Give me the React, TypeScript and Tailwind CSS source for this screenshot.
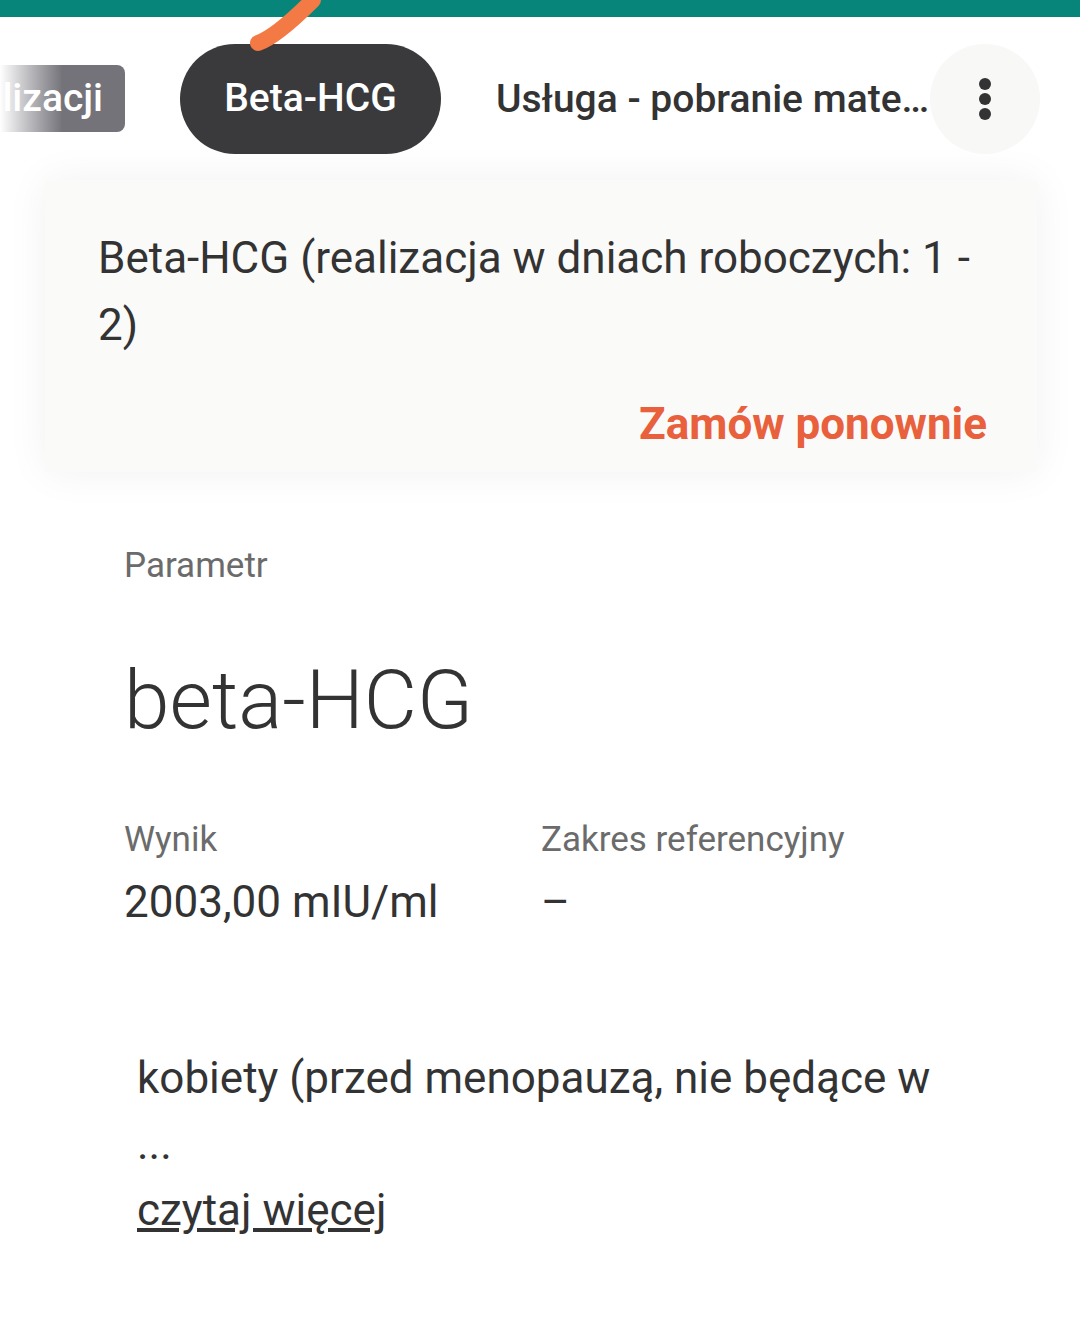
const MenuDots = () => (
  <svg width="14" height="44" viewBox="0 0 14 44" fill="#333333">
    <circle cx="7" cy="7" r="6" />
    <circle cx="7" cy="22" r="6" />
    <circle cx="7" cy="37" r="6" />
  </svg>
);

export default function App() {
  return (
    <div className="relative w-[1080px] h-[1343px] bg-white overflow-hidden font-['Roboto',sans-serif] text-[#333333]">
      <div className="h-[17px] bg-[#08857a]" />

      {/* tabs */}
      <div className="flex items-center h-[163px]">
        <div className="flex items-center justify-end w-[125px] h-[67px] rounded-r-lg bg-gradient-to-r from-white via-[#74737a] to-[#74737a] pr-[22px]">
          <span className="text-white text-[39px] font-medium leading-none">lizacji</span>
        </div>
        <div className="ml-[55px] flex items-center justify-center w-[261px] h-[110px] rounded-full bg-[#3a3a3c]">
          <span className="text-white text-[39px] font-medium leading-none">Beta-HCG</span>
        </div>
        <div className="ml-[55px] w-[434px] overflow-hidden whitespace-nowrap text-ellipsis text-[39px] font-medium leading-[50px]">
          Usługa - pobranie materiału
        </div>
        <div className="flex items-center justify-center w-[110px] h-[110px] rounded-full bg-[#f8f8f7]">
          <MenuDots />
        </div>
      </div>

      {/* order card */}
      <div className="mx-[45px] w-[992px] bg-[#fafaf9] shadow-[0_0_40px_rgba(0,0,0,0.06)] pt-[45px] pb-[17px] pl-[53px] pr-[50px]">
        <p className="text-[44px] leading-[67px]">Beta-HCG (realizacja w dniach roboczych: 1 - 2)</p>
        <div className="flex justify-end mt-[34px]">
          <span className="text-[#e8603c] text-[44px] font-bold leading-[62px]">Zamów ponownie</span>
        </div>
      </div>

      {/* result */}
      <div className="pl-[124px] pt-[74px]">
        <p className="text-[35px] text-[#6b6b6b] leading-[40px]">Parametr</p>
        <p className="mt-[69px] text-[82px] font-light leading-[90px]">beta-HCG</p>
        <div className="mt-[75px] grid grid-cols-[417px_1fr]">
          <div>
            <p className="text-[35px] text-[#6b6b6b] leading-[40px]">Wynik</p>
            <p className="mt-[17px] text-[44px] leading-[50px]">2003,00 mIU/ml</p>
          </div>
          <div>
            <p className="text-[35px] text-[#6b6b6b] leading-[40px]">Zakres referencyjny</p>
            <p className="mt-[17px] text-[44px] leading-[50px]">–</p>
          </div>
        </div>
      </div>

      <div className="pl-[137px] pt-[118px] text-[44px]">
        <p className="leading-[66px]">kobiety (przed menopauzą, nie będące w</p>
        <p className="leading-[66px]">...</p>
        <a className="underline leading-[66px]">czytaj więcej</a>
      </div>

      {/* orange annotation stroke */}
      <svg className="absolute left-0 top-0" width="1080" height="60" viewBox="0 0 1080 60">
        <path d="M258 43 C 272 38, 295 18, 313 0" stroke="#f47a45" strokeWidth="16" strokeLinecap="round" fill="none" />
      </svg>
    </div>
  );
}
